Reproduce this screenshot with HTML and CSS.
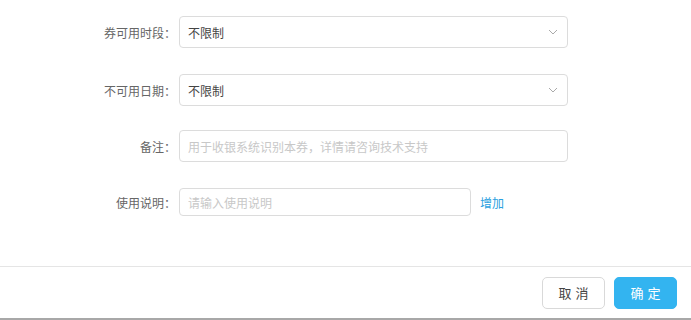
FILE: index.html
```html
<!DOCTYPE html>
<html lang="zh-CN">
<head>
    <meta charset="UTF-8">
    <title>券设置</title>
    <link rel="stylesheet" href="styles.css">
</head>
<body>

<div class="dialog">
    <div class="form">
        <div class="row">
            <label class="label">券可用时段：</label>
            <div class="select">
                <span>不限制</span>
                <svg class="arrow" width="10" height="6" viewBox="0 0 10 6"><path d="M1 1 L5 5 L9 1" fill="none" stroke="#aaa" stroke-width="1"/></svg>
            </div>
        </div>
        <div class="row row-date">
            <label class="label">不可用日期：</label>
            <div class="select">
                <span>不限制</span>
                <svg class="arrow" width="10" height="6" viewBox="0 0 10 6"><path d="M1 1 L5 5 L9 1" fill="none" stroke="#aaa" stroke-width="1"/></svg>
            </div>
        </div>
        <div class="row">
            <label class="label">备注：</label>
            <input class="input" type="text" placeholder="用于收银系统识别本券，详情请咨询技术支持">
        </div>
        <div class="row row-desc">
            <label class="label">使用说明：</label>
            <input class="input short" type="text" placeholder="请输入使用说明">
            <a class="add" href="#">增加</a>
        </div>
    </div>

    <div class="footer">
        <button class="btn">取消</button>
        <button class="btn primary">确定</button>
    </div>
</div>

</body>
</html>
```

FILE: styles.css
```css
body {
    margin: 0;
    font-family: "Noto Sans CJK SC", "Noto Sans", sans-serif;
    font-size: 12px;
    color: #333;
    background: #fff;
}

.dialog {
    width: 691px;
    height: 320px;
    display: flex;
    flex-direction: column;
    box-sizing: border-box;
    border-bottom: 2px solid #a8a8a8;
}

.form {
    flex: 1;
    padding-top: 16px;
}

.row {
    display: flex;
    align-items: center;
    height: 32px;
    margin-bottom: 26px;
}

.row-date {
    margin-bottom: 24px;
}

.row-desc {
    height: 28px;
}

.label {
    width: 176px;
    text-align: right;
    color: #666;
    margin-right: 3px;
    flex-shrink: 0;
}

.select {
    width: 389px;
    height: 32px;
    box-sizing: border-box;
    border: 1px solid #dcdcdc;
    border-radius: 4px;
    display: flex;
    align-items: center;
    justify-content: space-between;
    padding: 0 9px 0 8px;
    color: #444;
}

.arrow {
    display: block;
}

.input {
    width: 389px;
    height: 32px;
    box-sizing: border-box;
    border: 1px solid #dcdcdc;
    border-radius: 4px;
    padding: 0 8px;
    font-family: inherit;
    font-size: 12px;
    color: #333;
    outline: none;
}

.input.short {
    width: 292px;
    height: 28px;
}

.input::placeholder {
    color: #c8c8c8;
}

.add {
    margin-left: 9px;
    color: #2a9fe0;
    text-decoration: none;
}

.footer {
    border-top: 1px solid #e5e5e5;
    height: 51px;
    display: flex;
    align-items: center;
    justify-content: flex-end;
    gap: 9px;
    padding-right: 14px;
}

.btn {
    width: 63px;
    height: 32px;
    border: 1px solid #d9d9d9;
    border-radius: 5px;
    background: #fff;
    color: #444;
    font-family: inherit;
    font-size: 13px;
    letter-spacing: 4px;
    text-indent: 4px;
    cursor: pointer;
}

.btn.primary {
    background: #33b4f0;
    border-color: #33b4f0;
    color: #fff;
}
```
